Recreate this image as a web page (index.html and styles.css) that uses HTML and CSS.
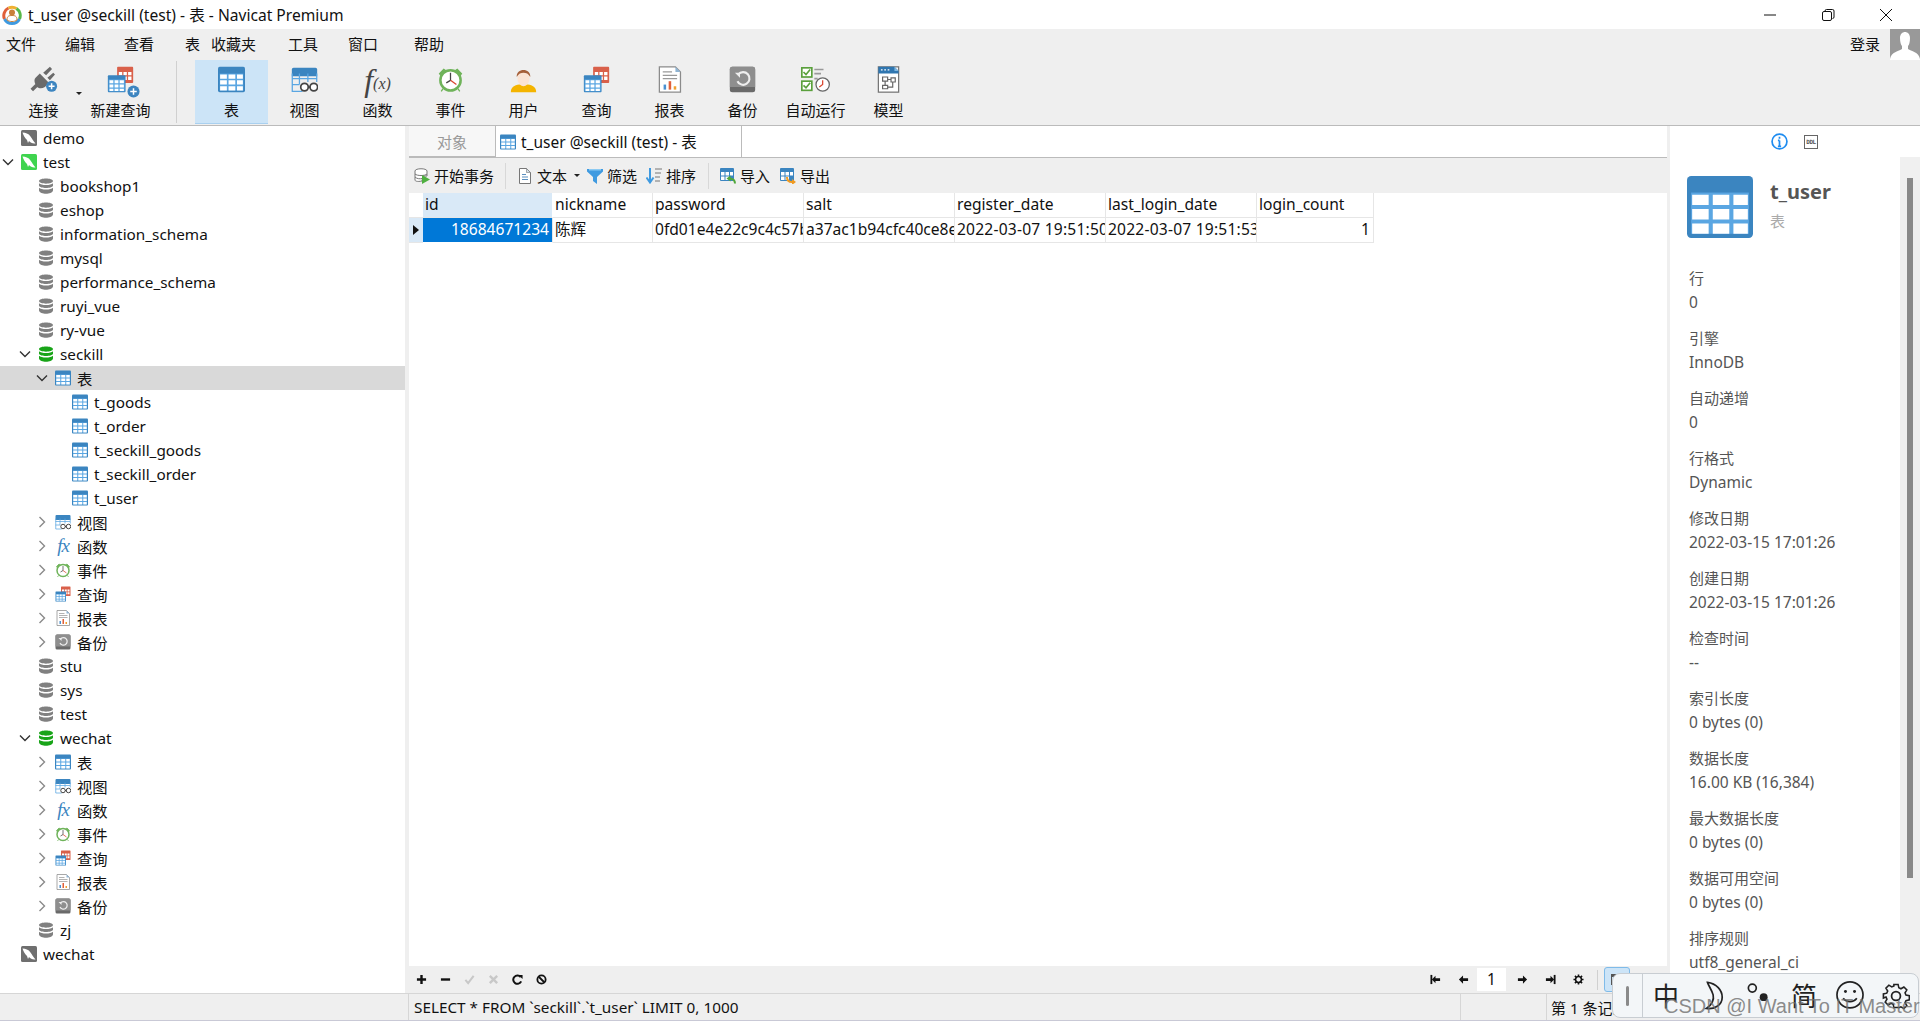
FILE: index.html
```html
<!DOCTYPE html>
<html lang="zh">
<head>
<meta charset="utf-8">
<title>t_user @seckill (test) - 表 - Navicat Premium</title>
<link rel="stylesheet" href="styles.css">
</head>
<body>
<svg class="defs" aria-hidden="true">
  <symbol id="i-table" viewBox="0 0 32 32"><rect x="0" y="1" width="32" height="30" rx="2" fill="#3b85c0"/><rect x="2" y="9" width="28" height="20" fill="#5aa6e2"/><path fill="#fff" d="M2.500 10h8v5h-8zM12.500 10h8v5h-8zM22.500 10h7v5h-7zM2.500 17h8v5h-8zM12.500 17h8v5h-8zM22.500 17h7v5h-7zM2.500 24h8v5h-8zM12.500 24h8v5h-8zM22.500 24h7v5h-7z"/></symbol>
  <symbol id="i-view" viewBox="0 0 32 32"><path d="M1 4a2 2 0 0 1 2-2h26a2 2 0 0 1 2 2v8H1z" fill="#3b85c0"/><path d="M1.500 9v21h12M30.500 9v10M10 9v13M20 9v10M1 15h29M1 22h9" stroke="#5aa6e2" stroke-width="1.500" fill="none"/><circle cx="16" cy="25" r="4.500" fill="#fff" stroke="#444" stroke-width="2"/><circle cx="27" cy="25" r="4.500" fill="#fff" stroke="#444" stroke-width="2"/><path d="M20 25h3" stroke="#444" stroke-width="2"/></symbol>
  <symbol id="i-clock" viewBox="0 0 32 32"><path d="M3 9l5-5 3 2-6 6zM29 9l-5-5-3 2 6 6zM7 27l-2 3M25 27l2 3" fill="#6fb35a" stroke="#6fb35a" stroke-width="1.500"/><circle cx="16" cy="17" r="12" fill="#fff" stroke="#6fb35a" stroke-width="3"/><path d="M16 8v9l-5 3" stroke="#444" stroke-width="1.500" fill="none"/><path d="M16 17l7 5" stroke="#d9452e" stroke-width="1.500"/></symbol>
  <symbol id="i-query" viewBox="0 0 32 32"><rect x="12" y="1" width="19" height="19" rx="1" fill="#d9604a"/><path fill="#fff" d="M14 7h4v4h-4zM19.500 7h4v4h-4zM25 7h4v4h-4zM14 12.500h4v4h-4zM19.500 12.500h4v4h-4zM25 12.500h4v4h-4z"/><rect x="1" y="11" width="21" height="20" rx="1" fill="#3b85c0"/><rect x="2" y="16" width="19" height="14" fill="#5aa6e2"/><path fill="#fff" d="M3 17h4.500v3.500H3zM9 17h4.500v3.500H9zM15 17h5v3.500h-5zM3 22h4.500v3.500H3zM9 22h4.500v3.500H9zM15 22h5v3.500h-5zM3 27h4.500v2.500H3zM9 27h4.500v2.500H9zM15 27h5v2.500h-5z"/></symbol>
  <symbol id="i-report" viewBox="0 0 32 32"><path d="M4 1h19l6 6v24H4z" fill="#fff" stroke="#8b8b8b" stroke-width="1.500"/><path d="M23 1v6h6z" fill="#8fb4d3"/><path d="M8 7h11M8 11h17M8 15h17" stroke="#999" stroke-width="1.500"/><path fill="#4a90d0" d="M9 22h3v6H9z"/><path fill="#e0603a" d="M15 18h3v10h-3z"/><path fill="#f0a030" d="M21 24h3v4h-3z"/></symbol>
  <symbol id="i-backup" viewBox="0 0 32 32"><rect x="1" y="1" width="30" height="30" rx="3" fill="#6a6a6a"/><path d="M1 4a3 3 0 0 1 3-3h24a3 3 0 0 1 3 3v21H1z" fill="#8e8e8e"/><path d="M11 10a7.500 7.500 0 1 1-1 8" fill="none" stroke="#eee" stroke-width="2.500"/><path d="M7 8h6v6z" fill="#eee"/></symbol>
  <symbol id="i-user" viewBox="0 0 32 32"><path d="M1 31c0-6 4-8 10-9h10c6 1 10 3 10 9z" fill="#f4b400"/><path d="M9 11c0-8 14-8 14 0v5c0 4-4 8-7 8s-7-4-7-8z" fill="#fbe3d3"/><path d="M8 13C7 2 25 2 24 13c-2-4-5-5-8-5s-6 1-8 5z" fill="#a5603a"/></symbol>
  <symbol id="i-auto" viewBox="0 0 36 32"><rect x="1" y="2" width="12" height="11" fill="#fff" stroke="#5aa03c" stroke-width="2"/><path d="M3 7l3 3 5-6" stroke="#5aa03c" stroke-width="2" fill="none"/><rect x="1" y="18" width="12" height="11" fill="#fff" stroke="#5aa03c" stroke-width="2"/><path d="M3 23l3 3 5-6" stroke="#5aa03c" stroke-width="2" fill="none"/><path d="M16 4h11M16 9h8M16 15h4" stroke="#999" stroke-width="2"/><circle cx="26" cy="22" r="8" fill="#fff" stroke="#666" stroke-width="1.500"/><path d="M26 17v5l-4 3" stroke="#d9452e" stroke-width="1.500" fill="none"/></symbol>
  <symbol id="i-model" viewBox="0 0 32 32"><rect x="4" y="1" width="24" height="30" fill="#fff" stroke="#777" stroke-width="1.500"/><path d="M4 1h19l5 5v3H4z" fill="#2f76b0"/><path d="M23 1l5 5h-5z" fill="#7fb7e0"/><path d="M7 4.500h2M11 4.500h2M15 4.500h2" stroke="#fff" stroke-width="1.500"/><path d="M9 13h6v5H9zM19 14h5v5h-5zM9 23h6v4H9zM12 18v5M15 16h4M21 19v6h-6" fill="none" stroke="#666" stroke-width="1.400"/></symbol>
  <symbol id="i-plug" viewBox="0 0 32 32"><path d="M0 27l7-7 3 3-7 7zM6 14l5-5 11 11-5 5c-3 2-7 2-9 0s-5-8-2-11z" fill="#6a6a6a"/><path d="M15 8l8-7 2.500 2.500-7 7.500zM20 14l7-6 2 2-6 7z" fill="#6a6a6a"/><circle cx="25" cy="24" r="6.500" fill="#3d85c0"/><path d="M25 20.500v7M21.500 24h7" stroke="#fff" stroke-width="1.800"/></symbol>
  <symbol id="i-plus" viewBox="0 0 14 14"><circle cx="7" cy="7" r="6.500" fill="#3d85c0"/><path d="M7 3.500v7M3.500 7h7" stroke="#fff" stroke-width="1.600"/></symbol>
  <symbol id="i-conn" viewBox="0 0 16 16"><rect x="0" y="0" width="16" height="16" rx="1.500" fill="currentColor"/><path d="M1.500 2.500c3 0 6 1 8 4 1.500 2 2.500 4 5 7-3 .5-5-1-6.500-2.500L7 13l-1-3C4 8 2.500 5.500 1.500 2.500z" fill="#fff"/></symbol>
  <symbol id="i-db" viewBox="0 0 16 16"><path fill="currentColor" d="M1 3c0-3.500 14-3.500 14 0s-14 3.500-14 0zM1 5.300c2 2.400 12 2.400 14 0v2.400c-1 3-13 3-14 0zM1 9.800c2 2.400 12 2.400 14 0v2.700c-1 4.300-13 4.300-14 0z"/></symbol>
  <symbol id="i-tx" viewBox="0 0 16 16"><path d="M1 3c0-3 12-3 12 0v5H9l-1 5c-5 1-7 0-7-1z" fill="#fff" stroke="#777"/><path d="M1 6c2 2 10 2 12 0M1 9c2 2 5 2 7 1.500" fill="none" stroke="#777"/><path d="M8 7l8 4.500L8 16z" fill="#4fb040"/></symbol>
  <symbol id="i-doc" viewBox="0 0 16 16"><path d="M2.500 .5h7l4 4v11h-11z" fill="#fff" stroke="#777"/><path d="M9.500 .5v4h4z" fill="#cfdde9" stroke="#777" stroke-width=".6"/><path d="M5 6.500h4M5 9h6M5 11.500h6" stroke="#5a8fc0"/></symbol>
  <symbol id="i-funnel" viewBox="0 0 16 16"><path d="M0 1h16v2.500L10 9v7l-4-3V9L0 3.500z" fill="#3f9ae0"/><path d="M2 1h12v1.500H2z" fill="#8ccaf2"/></symbol>
  <symbol id="i-sort" viewBox="0 0 16 16"><path d="M4 0v13M.500 9.500L4 14.500l3.500-5" stroke="#3f9ae0" stroke-width="2" fill="none"/><path d="M9 1h7M9 5h6M9 9h5M9 13h5" stroke="#777"/></symbol>
  <symbol id="i-import" viewBox="0 0 16 16"><rect x="0" y="0" width="14" height="13" rx="1" fill="#3b85c0"/><path fill="#fff" d="M1 4h3.500v3.500H1zM5.500 4h3.500v3.500H5.500zM10 4h3v3.500h-3zM1 8.500h3.500V12H1zM5.500 8.500h3.500V12H5.500z"/><path d="M15 15.500c0-4-2-5-6-5" fill="none" stroke="#4fa83a" stroke-width="2"/><path d="M6.500 10.500l4-3v6z" fill="#4fa83a"/></symbol>
  <symbol id="i-export" viewBox="0 0 16 16"><rect x="0" y="0" width="14" height="13" rx="1" fill="#3b85c0"/><path fill="#fff" d="M1 4h3.500v3.500H1zM5.500 4h3.500v3.500H5.500zM10 4h3v3.500h-3zM1 8.500h3.500V12H1zM5.500 8.500h3.500V12H5.500z"/><path d="M7 9c0 4 2 5 5 5" fill="none" stroke="#f09a20" stroke-width="2"/><path d="M16 14l-4-3v6z" fill="#f09a20"/></symbol>
  <symbol id="i-right" viewBox="0 0 16 16"><path d="M5.500 3l5 5-5 5" fill="none" stroke="#8a8a8a" stroke-width="1.400"/></symbol>
  <symbol id="i-down" viewBox="0 0 16 16"><path d="M3 5.500l5 5 5-5" fill="none" stroke="#333" stroke-width="1.400"/></symbol>
  <symbol id="i-gear" viewBox="0 0 24 24"><path fill="none" stroke="currentColor" stroke-width="3.500" d="M12 5.500a6.500 6.500 0 1 0 .01 0z"/><path stroke="currentColor" stroke-width="3.500" d="M12 1v4M12 19v4M1 12h4M19 12h4M4.200 4.200l2.900 2.900M16.900 16.900l2.900 2.900M4.200 19.800l2.900-2.900M16.900 7.100l2.900-2.900"/></symbol>
</svg>

<div class="app">
  <header class="titlebar">
    <svg class="logo" viewBox="0 0 20 20"><path d="M2.500 14a8.500 8.500 0 0 1 4-11" fill="none" stroke="#e0603a" stroke-width="3"/><path d="M6.500 3a8.500 8.500 0 0 1 8 .5" fill="none" stroke="#f0b030" stroke-width="3"/><path d="M14.500 3.500a8.500 8.500 0 0 1 3 10.500" fill="none" stroke="#58b848" stroke-width="3"/><path d="M17.500 14a8.500 8.500 0 0 1-15 0" fill="none" stroke="#3f9ae0" stroke-width="3"/><circle cx="10" cy="7.500" r="3" fill="#c9803a"/><path d="M5 15c0-4 2-4.500 5-4.500s5 .5 5 4.500c-3 2-7 2-10 0z" fill="#fff" stroke="#c9803a"/></svg>
    <span class="title-text">t_user @seckill (test) - 表 - Navicat Premium</span>
    <div class="winctl">
      <svg viewBox="0 0 14 14"><path d="M1 7h12" stroke="#111" stroke-width="1"/></svg>
      <svg viewBox="0 0 14 14"><rect x="1.500" y="3.500" width="9" height="9" rx="1.500" fill="none" stroke="#111"/><path d="M4 3.500V3a1.500 1.500 0 0 1 1.500-1.500h6A1.500 1.500 0 0 1 13 3v6a1.500 1.500 0 0 1-1.500 1.500" fill="none" stroke="#111"/></svg>
      <svg viewBox="0 0 14 14"><path d="M1 1l12 12M13 1L1 13" stroke="#111"/></svg>
    </div>
  </header>

  <nav class="menubar">
    <span>文件</span><span>编辑</span><span>查看</span><span>表</span><span>收藏夹</span><span>工具</span><span>窗口</span><span>帮助</span>
    <div class="account">
      <span>登录</span>
      <svg class="avatar" viewBox="0 0 30 31"><rect width="30" height="31" fill="#999"/><path d="M10 9c0-8 10-8 10 0 0 4-1 7-2 8v3c3 2 11 3 12 10v1H0v-1c1-7 9-8 12-10v-3c-1-1-2-4-2-8z" fill="#fff"/></svg>
    </div>
  </nav>

  <div class="toolbar">
    <div class="tool tool-conn"><span class="tool-icon"><svg class="wide"><use href="#i-plug"/></svg></span><span>连接</span><i class="caret tool-caret"></i></div>
    <div class="tool tool-new"><span class="tool-icon"><svg><use href="#i-query"/></svg><svg class="tool-badge"><use href="#i-plus"/></svg></span><span>新建查询</span></div>
    <i class="tool-sep"></i>
    <div class="tool active"><span class="tool-icon"><svg><use href="#i-table"/></svg></span><span>表</span></div>
    <div class="tool"><span class="tool-icon"><svg><use href="#i-view"/></svg></span><span>视图</span></div>
    <div class="tool"><span class="tool-icon fx"><em>f</em><small>(x)</small></span><span>函数</span></div>
    <div class="tool"><span class="tool-icon"><svg><use href="#i-clock"/></svg></span><span>事件</span></div>
    <div class="tool"><span class="tool-icon"><svg><use href="#i-user"/></svg></span><span>用户</span></div>
    <div class="tool"><span class="tool-icon"><svg><use href="#i-query"/></svg></span><span>查询</span></div>
    <div class="tool"><span class="tool-icon"><svg><use href="#i-report"/></svg></span><span>报表</span></div>
    <div class="tool"><span class="tool-icon"><svg><use href="#i-backup"/></svg></span><span>备份</span></div>
    <div class="tool"><span class="tool-icon"><svg class="wide"><use href="#i-auto"/></svg></span><span>自动运行</span></div>
    <div class="tool"><span class="tool-icon"><svg><use href="#i-model"/></svg></span><span>模型</span></div>
  </div>

  <div class="workspace">
    <aside class="tree">
      <div class="row l0"><i class="chev"></i><span class="ico gray"><svg><use href="#i-conn"/></svg></span>demo</div>
      <div class="row l0"><svg class="chev"><use href="#i-down"/></svg><span class="ico green"><svg><use href="#i-conn"/></svg></span>test</div>
      <div class="row l1"><i class="chev"></i><span class="ico dbg"><svg><use href="#i-db"/></svg></span>bookshop1</div>
      <div class="row l1"><i class="chev"></i><span class="ico dbg"><svg><use href="#i-db"/></svg></span>eshop</div>
      <div class="row l1"><i class="chev"></i><span class="ico dbg"><svg><use href="#i-db"/></svg></span>information_schema</div>
      <div class="row l1"><i class="chev"></i><span class="ico dbg"><svg><use href="#i-db"/></svg></span>mysql</div>
      <div class="row l1"><i class="chev"></i><span class="ico dbg"><svg><use href="#i-db"/></svg></span>performance_schema</div>
      <div class="row l1"><i class="chev"></i><span class="ico dbg"><svg><use href="#i-db"/></svg></span>ruyi_vue</div>
      <div class="row l1"><i class="chev"></i><span class="ico dbg"><svg><use href="#i-db"/></svg></span>ry-vue</div>
      <div class="row l1"><svg class="chev"><use href="#i-down"/></svg><span class="ico dbon"><svg><use href="#i-db"/></svg></span>seckill</div>
      <div class="row l2 selected"><svg class="chev"><use href="#i-down"/></svg><span class="ico"><svg><use href="#i-table"/></svg></span>表</div>
      <div class="row l3"><i class="chev"></i><span class="ico"><svg><use href="#i-table"/></svg></span>t_goods</div>
      <div class="row l3"><i class="chev"></i><span class="ico"><svg><use href="#i-table"/></svg></span>t_order</div>
      <div class="row l3"><i class="chev"></i><span class="ico"><svg><use href="#i-table"/></svg></span>t_seckill_goods</div>
      <div class="row l3"><i class="chev"></i><span class="ico"><svg><use href="#i-table"/></svg></span>t_seckill_order</div>
      <div class="row l3"><i class="chev"></i><span class="ico"><svg><use href="#i-table"/></svg></span>t_user</div>
      <div class="row l2"><svg class="chev"><use href="#i-right"/></svg><span class="ico"><svg><use href="#i-view"/></svg></span>视图</div>
      <div class="row l2"><svg class="chev"><use href="#i-right"/></svg><span class="ico fxs"><em>f</em><em>x</em></span>函数</div>
      <div class="row l2"><svg class="chev"><use href="#i-right"/></svg><span class="ico"><svg><use href="#i-clock"/></svg></span>事件</div>
      <div class="row l2"><svg class="chev"><use href="#i-right"/></svg><span class="ico"><svg><use href="#i-query"/></svg></span>查询</div>
      <div class="row l2"><svg class="chev"><use href="#i-right"/></svg><span class="ico"><svg><use href="#i-report"/></svg></span>报表</div>
      <div class="row l2"><svg class="chev"><use href="#i-right"/></svg><span class="ico"><svg><use href="#i-backup"/></svg></span>备份</div>
      <div class="row l1"><i class="chev"></i><span class="ico dbg"><svg><use href="#i-db"/></svg></span>stu</div>
      <div class="row l1"><i class="chev"></i><span class="ico dbg"><svg><use href="#i-db"/></svg></span>sys</div>
      <div class="row l1"><i class="chev"></i><span class="ico dbg"><svg><use href="#i-db"/></svg></span>test</div>
      <div class="row l1"><svg class="chev"><use href="#i-down"/></svg><span class="ico dbon"><svg><use href="#i-db"/></svg></span>wechat</div>
      <div class="row l2"><svg class="chev"><use href="#i-right"/></svg><span class="ico"><svg><use href="#i-table"/></svg></span>表</div>
      <div class="row l2"><svg class="chev"><use href="#i-right"/></svg><span class="ico"><svg><use href="#i-view"/></svg></span>视图</div>
      <div class="row l2"><svg class="chev"><use href="#i-right"/></svg><span class="ico fxs"><em>f</em><em>x</em></span>函数</div>
      <div class="row l2"><svg class="chev"><use href="#i-right"/></svg><span class="ico"><svg><use href="#i-clock"/></svg></span>事件</div>
      <div class="row l2"><svg class="chev"><use href="#i-right"/></svg><span class="ico"><svg><use href="#i-query"/></svg></span>查询</div>
      <div class="row l2"><svg class="chev"><use href="#i-right"/></svg><span class="ico"><svg><use href="#i-report"/></svg></span>报表</div>
      <div class="row l2"><svg class="chev"><use href="#i-right"/></svg><span class="ico"><svg><use href="#i-backup"/></svg></span>备份</div>
      <div class="row l1"><i class="chev"></i><span class="ico dbg"><svg><use href="#i-db"/></svg></span>zj</div>
      <div class="row l0"><i class="chev"></i><span class="ico gray"><svg><use href="#i-conn"/></svg></span>wechat</div>
    </aside>

    <main class="main">
      <div class="tabs">
        <div class="tab tab-obj">对象</div>
        <div class="tab tab-on"><svg><use href="#i-table"/></svg><span>t_user @seckill (test) - 表</span></div>
      </div>
      <div class="gridbar">
        <div class="gb gb-tx"><svg><use href="#i-tx"/></svg><span>开始事务</span></div>
        <i class="gb-sep"></i>
        <div class="gb"><svg><use href="#i-doc"/></svg><span>文本</span><i class="caret gb-caret"></i></div>
        <div class="gb"><svg><use href="#i-funnel"/></svg><span>筛选</span></div>
        <div class="gb"><svg><use href="#i-sort"/></svg><span>排序</span></div>
        <i class="gb-sep gb-sep2"></i>
        <div class="gb"><svg><use href="#i-import"/></svg><span>导入</span></div>
        <div class="gb gb-last"><svg><use href="#i-export"/></svg><span>导出</span></div>
      </div>
      <div class="gridwrap">
        <div class="grid">
          <div class="cell ind"></div>
          <div class="cell head head-on">id</div>
          <div class="cell head">nickname</div>
          <div class="cell head">password</div>
          <div class="cell head">salt</div>
          <div class="cell head">register_date</div>
          <div class="cell head">last_login_date</div>
          <div class="cell head">login_count</div>
          <div class="cell ind ind-on"><i class="arrow"></i></div>
          <div class="cell num cur">18684671234</div>
          <div class="cell">陈辉</div>
          <div class="cell">0fd01e4e22c9c4c57b2a1e8</div>
          <div class="cell">a37ac1b94cfc40ce8e6d7a1</div>
          <div class="cell date">2022-03-07 19:51:50</div>
          <div class="cell date">2022-03-07 19:51:53</div>
          <div class="cell num">1</div>
        </div>
      </div>
      <div class="navbar">
        <div class="nav-btn"><svg viewBox="0 0 12 12"><path d="M6 1v10M1 6h10" stroke="#111" stroke-width="2.600"/></svg></div>
        <div class="nav-btn"><svg viewBox="0 0 12 12"><path d="M1 6h10" stroke="#111" stroke-width="2.600"/></svg></div>
        <div class="nav-btn"><svg viewBox="0 0 12 12"><path d="M1.500 6.500l3 3.500 6-8" fill="none" stroke="#c8c8c8" stroke-width="2.200"/></svg></div>
        <div class="nav-btn"><svg viewBox="0 0 12 12"><path d="M2 2l8 8M10 2l-8 8" stroke="#c8c8c8" stroke-width="2.600"/></svg></div>
        <div class="nav-btn"><svg viewBox="0 0 12 12"><path d="M9.500 3.500A4.500 4.500 0 1 0 10 8" fill="none" stroke="#111" stroke-width="2.200"/><path d="M7 1l4.500 0v4.500z" fill="#111"/></svg></div>
        <div class="nav-btn"><svg viewBox="0 0 12 12"><circle cx="6" cy="6" r="4.500" fill="none" stroke="#111" stroke-width="2"/><path d="M3 3l6 6" stroke="#111" stroke-width="2"/></svg></div>
        <div class="pager">
          <div class="nav-btn"><svg viewBox="0 0 12 12"><path d="M1.500 1v10" stroke="#111" stroke-width="2"/><path d="M2 6l4-4v2.500h5v3H6V10z" fill="#111"/></svg></div>
          <div class="nav-btn"><svg viewBox="0 0 12 12"><path d="M1 6l4.500-4.500v3h5.500v3H5.500v3z" fill="#111"/></svg></div>
          <div class="page-input">1</div>
          <div class="nav-btn"><svg viewBox="0 0 12 12"><path d="M11 6L6.500 1.500v3H1v3h5.500v3z" fill="#111"/></svg></div>
          <div class="nav-btn"><svg viewBox="0 0 12 12"><path d="M10.500 1v10" stroke="#111" stroke-width="2"/><path d="M10 6L6 2v2.500H1v3h5V10z" fill="#111"/></svg></div>
          <div class="nav-btn nav-gear"><svg><use href="#i-gear"/></svg></div>
          <i class="nav-sep"></i>
          <div class="view-btn view-on"><i></i></div>
          <div class="view-btn"><i></i></div>
        </div>
      </div>
    </main>

    <aside class="info">
      <div class="info-tabs">
        <svg class="info-i" viewBox="0 0 16 16"><circle cx="8" cy="8" r="7" fill="#fff" stroke="#1e8cf0" stroke-width="1.600"/><path d="M8 3.500v2M8 7v5.500M6.500 7H8M6.500 12.500h3" stroke="#1e8cf0" stroke-width="1.600" fill="none"/></svg>
        <span class="info-ddl">DDL</span>
      </div>
      <div class="info-body">
        <div class="info-list">
          <div class="info-head">
            <svg class="info-icon"><use href="#i-table"/></svg>
            <div><div class="info-name">t_user</div><div class="info-type">表</div></div>
          </div>
          <dl>
            <dt>行</dt><dd>0</dd>
            <dt>引擎</dt><dd>InnoDB</dd>
            <dt>自动递增</dt><dd>0</dd>
            <dt>行格式</dt><dd>Dynamic</dd>
            <dt>修改日期</dt><dd>2022-03-15 17:01:26</dd>
            <dt>创建日期</dt><dd>2022-03-15 17:01:26</dd>
            <dt>检查时间</dt><dd>--</dd>
            <dt>索引长度</dt><dd>0 bytes (0)</dd>
            <dt>数据长度</dt><dd>16.00 KB (16,384)</dd>
            <dt>最大数据长度</dt><dd>0 bytes (0)</dd>
            <dt>数据可用空间</dt><dd>0 bytes (0)</dd>
            <dt>排序规则</dt><dd>utf8_general_ci</dd>
          </dl>
        </div>
        <div class="scroll"><i></i></div>
      </div>
    </aside>
  </div>

  <footer class="status">
    <span class="status-sql">SELECT * FROM `seckill`.`t_user` LIMIT 0, 1000</span>
    <span class="status-mid"></span>
    <span class="status-rec">第 1 条记录 (共 1 条) 于第 1 页</span>
  </footer>

  <div class="ime">
    <i class="ime-handle"></i>
    <div class="ime-items">
      <span class="ime-zh">中</span>
      <svg viewBox="0 0 24 30"><path d="M8 3c8 1 13 7 13 13 0 7-7 11-14 10 5-3 7-8 6-12S9 6 8 3z" fill="none" stroke="#222" stroke-width="1.500"/></svg>
      <svg viewBox="0 0 24 30"><circle cx="7" cy="8" r="3.500" fill="none" stroke="#222" stroke-width="1.500"/><circle cx="17" cy="16" r="3.500" fill="#222"/></svg>
      <span class="ime-zh">简</span>
      <svg viewBox="0 0 26 30"><circle cx="13" cy="14" r="11.500" fill="none" stroke="#222" stroke-width="1.500"/><circle cx="9" cy="11" r="1.300" fill="#222"/><circle cx="17" cy="11" r="1.300" fill="#222"/><path d="M7 17c3 4 9 4 12 0" fill="none" stroke="#222" stroke-width="1.500"/></svg>
      <svg class="ime-gear" viewBox="0 0 24 24"><path d="M10 1h4l.7 3.200 2 .9 2.800-1.700 2.800 2.800-1.700 2.800.9 2 3.200.7v4l-3.200.7-.9 2 1.700 2.800-2.800 2.800-2.800-1.700-2 .9L14 23h-4l-.7-3.200-2-.9-2.800 1.700-2.800-2.800 1.700-2.800-.9-2L0 14v-4l3.200-.7.9-2-1.700-2.800 2.800-2.800 2.800 1.700 2-.9z" transform="translate(1.200 1.200) scale(.9)" fill="none" stroke="#222" stroke-width="1.500"/><circle cx="12" cy="12" r="3.800" fill="none" stroke="#222" stroke-width="1.500"/></svg>
    </div>
    <span class="watermark">CSDN @I Want To IT Master</span>
  </div>
</div>
</body>
</html>
```

FILE: styles.css
```css
* { box-sizing: border-box; }
html, body { margin: 0; padding: 0; height: 100%; overflow: hidden; }
body {
  font-family: "Noto Sans", "Noto Sans CJK SC", sans-serif;
  font-size: 15.5px;
  color: #111;
  background: #efefef;
}
.defs { position: absolute; width: 0; height: 0; }
i { font-style: normal; }

.app { position: relative; display: flex; flex-direction: column; width: 1920px; height: 1021px; overflow: hidden; }

/* title bar */
.titlebar { flex: 0 0 29px; display: flex; align-items: center; background: #fff; padding-left: 2px; }
.logo { width: 20px; height: 20px; margin-right: 6px; }
.title-text { font-size: 15.6px; }
.winctl { margin-left: auto; display: flex; gap: 44px; padding-right: 27px; }
.winctl svg { width: 14px; height: 14px; }

/* menu */
.menubar { flex: 0 0 29px; display: grid; grid-template-columns: 59px 59px 61px 26px 77px 60px 66px 60px 1fr; align-items: center; padding-left: 6px; font-size: 15px; }
.account { display: flex; justify-content: flex-end; align-items: center; height: 29px; gap: 10px; }
.avatar { width: 30px; height: 31px; align-self: flex-start; }

/* big toolbar */
.toolbar { flex: 0 0 68px; display: flex; align-items: stretch; padding: 2px 0 1px 7px; border-bottom: 1px solid #bbb; font-size: 15px; }
.tool { position: relative; width: 73px; display: flex; flex-direction: column; align-items: center; }
.tool > span:last-of-type { line-height: 22px; }
.tool-icon { position: relative; height: 39px; display: flex; align-items: center; justify-content: center; }
.tool-icon svg { width: 27px; height: 27px; }
.tool-icon svg.wide { width: 30px; }
.tool.active { background: #cce4f7; border-bottom: 1px solid #a9d0ef; }
.tool-new { margin-left: 4px; }
.tool-badge.tool-badge { position: absolute; right: -6px; bottom: 1px; width: 13px; height: 13px; }
.tool-sep { width: 1px; margin: 1px 18px 1px 19px; background: #d0d0d0; }
.caret { display: block; width: 0; height: 0; border-left: 3px solid transparent; border-right: 3px solid transparent; border-top: 3px solid #222; }
.tool-caret { position: absolute; left: 69px; top: 32px; }
.fx { font-family: "Liberation Serif", serif; color: #444; font-style: italic; }
.fx em { font-size: 32px; line-height: 32px; }
.fx small { font-size: 16px; margin-top: 8px; }

/* workspace */
.workspace { flex: 1 1 auto; min-height: 0; display: flex; }
.tree { flex: 0 0 405px; background: #fff; overflow: hidden; }
.row { height: 24px; display: flex; align-items: center; white-space: nowrap; font-size: 15.3px; }
.row.selected { background: #d9d9d9; }
.l0 { padding-left: 0; }
.l1 { padding-left: 17px; }
.l2 { padding-left: 34px; }
.l3 { padding-left: 51px; }
.chev { display: block; flex: 0 0 16px; width: 16px; height: 16px; margin-right: 4px; }
.ico { flex: 0 0 18px; width: 18px; height: 18px; margin-right: 5px; display: flex; align-items: center; justify-content: center; }
.ico svg { width: 16px; height: 16px; display: block; }
.gray { color: #6f6f6f; }
.green { color: #3fd44f; }
.dbg { color: #808080; }
.dbon { color: #18a418; }
.fxs { font-family: "Liberation Serif", serif; font-style: italic; color: #3b85c0; font-size: 19px; letter-spacing: -1px; }
.fxs em { line-height: 18px; }

/* main column */
.main { flex: 0 0 1258px; margin-left: 4px; margin-right: 3px; display: flex; flex-direction: column; background: #efefef; }
.tabs { flex: 0 0 31px; display: flex; background: #fff; border-bottom: 1px solid #bbb; }
.tab { height: 31px; display: flex; align-items: center; }
.tab-obj { width: 86px; justify-content: center; color: #999; background: #f7f7f7; border-bottom: 1px solid #bbb; font-size: 15px; }
.tab-on { width: 247px; padding-left: 4px; background: #fff; border-left: 1px solid #bbb; border-right: 1px solid #bbb; gap: 5px; }
.tab-on svg { width: 16px; height: 16px; }

.gridbar { flex: 0 0 35px; display: flex; align-items: center; gap: 9px; padding-left: 2px; font-size: 15px; }
.gb { display: flex; align-items: center; gap: 4px; }
.gb svg { width: 16px; height: 16px; }
.gb-tx { padding-left: 3px; }
.gb-sep { width: 1px; height: 26px; margin: 0 2px 0 2px; background: #d8d8d8; }
.gb-sep2 { margin: 0 2px 0 3px; }
.gb-last { margin-left: 1px; }
.gb-caret { margin: 0 -2px 0 3px; }

.gridwrap { flex: 1 1 auto; min-height: 0; background: #fff; }
.grid { display: grid; grid-template-columns: 14px 130px 100px 151px 151px 151px 151px 117px; grid-auto-rows: 25px; width: 965px; }
.cell { padding: 0 2px; line-height: 23px; overflow: hidden; white-space: nowrap; border-right: 1px solid #e6e6e6; border-bottom: 1px solid #e6e6e6; font-size: 15.6px; }
.head-on { background: #d9e9f7; border-right-color: #fff; }
.ind { padding: 0; border-right: 0; }
.ind-on { background: #d9e9f7; display: flex; align-items: center; justify-content: center; }
.arrow { display: block; width: 0; height: 0; border-left: 6px solid #111; border-top: 5px solid transparent; border-bottom: 5px solid transparent; }
.num { text-align: right; padding-right: 3px; }
.cur { background: #0078d7; color: #fff; border-bottom-color: #fff; }
.date { letter-spacing: .2px; }

.navbar { flex: 0 0 27px; display: flex; align-items: center; }
.nav-btn { width: 24px; height: 24px; display: flex; align-items: center; justify-content: center; }
.nav-btn svg { width: 11px; height: 11px; }
.pager { margin-left: auto; padding-right: 7px; display: flex; align-items: center; }
.pager .nav-btn + .nav-btn { margin-left: 4px; }
.page-input { width: 29px; height: 23px; margin: 0 4px 0 2px; background: #fff; text-align: center; line-height: 23px; }
.page-input + .nav-btn { margin-left: 0; }
.nav-gear { margin-left: 5px; color: #111; }
.nav-sep { width: 1px; height: 20px; margin: 0 6px 0 7px; background: #d0d0d0; }
.view-btn { width: 26px; height: 25px; margin-right: 2px; border-radius: 3px; display: flex; align-items: center; justify-content: center; }
.view-on { background: #cce4f7; border: 1px solid #7fbbe9; }
.view-btn i { display: block; width: 13px; height: 11px; border: 1px solid #555; border-top-width: 3px; }

/* info panel */
.info { flex: 0 0 250px; display: flex; flex-direction: column; background: #fff; }
.info-tabs { flex: 0 0 31px; display: flex; align-items: center; justify-content: flex-start; padding-left: 101px; gap: 16px; }
.info-i { width: 17px; height: 17px; }
.info-ddl { width: 14px; height: 14px; border: 1px solid #666; color: #555; font: bold 6px/12px "DejaVu Sans Mono", monospace; text-align: center; letter-spacing: -.4px; overflow: hidden; }
.info-body { flex: 1 1 auto; min-height: 0; display: flex; }
.info-list { flex: 0 0 230px; padding: 17px 0 0 17px; overflow: hidden; }
.info-head { display: flex; gap: 17px; height: 93px; }
.info-icon { width: 66px; height: 66px; flex: none; }
.info-name { margin-top: 5px; font-size: 20px; font-weight: 700; color: #555; line-height: 26px; }
.info-type { margin-top: 5px; color: #aaa; font-size: 15px; line-height: 22px; }
dl { margin: 0; padding-left: 2px; }
dt { color: #555; font-size: 15px; line-height: 22px; padding-bottom: 2px; }
dd { margin: 0 0 14px; color: #555; line-height: 22px; }
.scroll { flex: 0 0 20px; background: #f0f0f0; padding: 21px 7px 0; }
.scroll i { display: block; width: 6px; height: 700px; background: #8a8a8a; }

/* status bar */
.status { flex: 0 0 28px; display: flex; align-items: center; background: #efefef; border-top: 1px solid #d6d6d6; border-bottom: 1px solid #c9c9d6; white-space: nowrap; height: 28px; }
.status span { height: 100%; display: flex; align-items: center; }
.status-sql { width: 1052px; margin-left: 408px; padding-left: 5px; border-left: 1px solid #d6d6d6; font-size: 15.3px; }
.status-mid { width: 86px; border-left: 1px solid #d6d6d6; }
.status-rec { padding-left: 4px; border-left: 1px solid #d6d6d6; font-size: 15px; }

/* floating IME bar */
.ime { position: absolute; left: 1612px; top: 973px; width: 307px; height: 45px; display: flex; align-items: center; background: #f3f6f8; border: 1px solid #c8cdd2; border-radius: 8px; }
.ime-handle { display: block; width: 3px; height: 20px; margin-left: 13px; border-radius: 2px; background: #8a8a8a; }
.ime-items { height: 100%; margin-left: 13px; border-left: 1px solid #c8cdd2; display: grid; grid-template-columns: repeat(6, 46px); align-items: center; justify-items: center; flex: none; width: 276px; }
.ime-items svg { width: 30px; height: 34px; }
.ime-items .ime-gear { width: 28px; height: 28px; }
.ime-zh { font-size: 26px; line-height: 34px; text-align: center; color: #222; }
.watermark { position: absolute; left: 51px; top: 21px; font: 20px "Liberation Sans", sans-serif; color: rgba(110, 110, 110, .8); white-space: nowrap; }
```
